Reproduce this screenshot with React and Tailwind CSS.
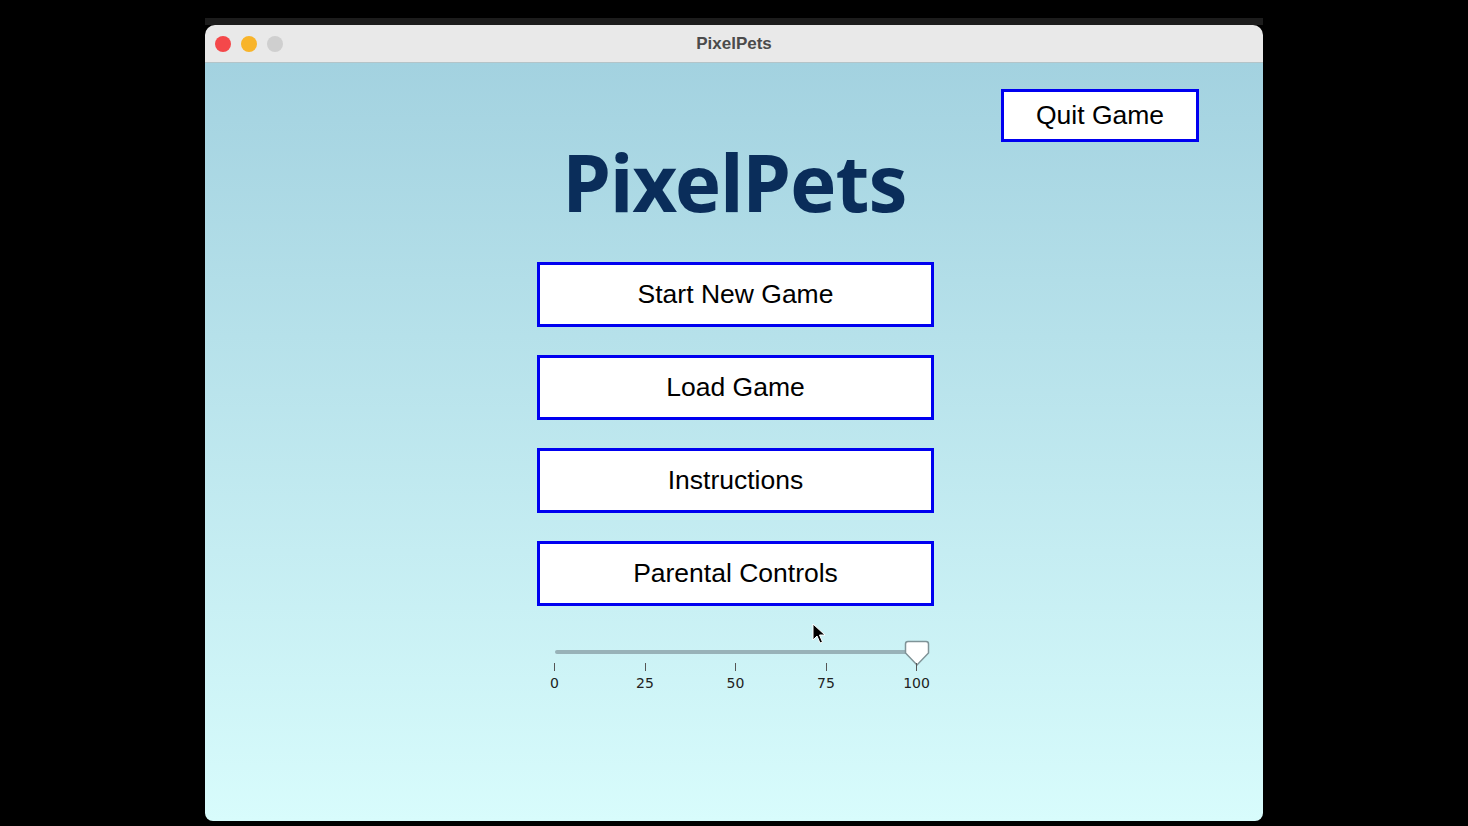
import React from "react";

function MenuButton({ children }) {
  return (
    <button className="w-[397px] h-[65px] bg-white border-[3px] border-[#0000f0] flex items-center justify-center text-[26.5px] text-black font-['Liberation_Sans',Arial,sans-serif]">
      {children}
    </button>
  );
}

export default function App() {
  const ticks = ["0", "25", "50", "75", "100"];
  return (
    <div className="w-[1468px] h-[826px] bg-black relative overflow-hidden font-['Liberation_Sans',Arial,sans-serif]">
      <div className="pt-[18px] pl-[205px]">
        <div className="w-[1058px] h-[7px] bg-[#1c1c1c]" />
        <div className="w-[1058px] h-[796px] rounded-t-[10px] rounded-b-[8px] overflow-hidden flex flex-col">
          <div className="h-[38px] bg-[#e9e9e9] border-b border-[#b4c4c8] relative flex items-center justify-center">
            <div className="absolute left-[10px] top-[11px] flex gap-[10px]">
              <div className="w-[16px] h-[16px] rounded-full bg-[#f4484a]" />
              <div className="w-[16px] h-[16px] rounded-full bg-[#f8b42a]" />
              <div className="w-[16px] h-[16px] rounded-full bg-[#cfcfcf]" />
            </div>
            <span className="text-[17px] font-bold text-[#4b4b4b] font-['Liberation_Sans',Arial,sans-serif] mt-[1px]">PixelPets</span>
          </div>
          <div className="flex-1 bg-gradient-to-b from-[#a3d2e0] to-[#d8fcfc] relative flex flex-col items-center">
            <div className="w-full flex justify-end pr-[64px] pt-[26px]">
              <button className="w-[198px] h-[53px] bg-white border-[3px] border-[#0000f0] flex items-center justify-center text-[26.5px] text-black font-['Liberation_Sans',Arial,sans-serif]">
                Quit Game
              </button>
            </div>
            <h1 className="h-[120px] text-[78px] leading-[80px] font-bold text-[#0a2d5a] font-['Noto_Sans',sans-serif] tracking-[-1px] pl-[1px]">
              PixelPets
            </h1>
            <div className="flex flex-col gap-[28px] pl-[3px]">
              <MenuButton>Start New Game</MenuButton>
              <MenuButton>Load Game</MenuButton>
              <MenuButton>Instructions</MenuButton>
              <MenuButton>Parental Controls</MenuButton>
            </div>
            <div className="mt-[34px] w-[396px] ml-[3px] relative h-[60px]">
              <div className="absolute left-[17px] top-[10px] w-[362px] h-[4px] rounded-full bg-[#98b2b8]" />
              <svg className="absolute left-[366px] top-[0px]" width="26" height="30" viewBox="0 0 26 30">
                <path d="M4 1.5 H22 Q24.5 1.5 24.5 4 V13 L13 25 L1.5 13 V4 Q1.5 1.5 4 1.5 Z" fill="#ffffff" stroke="#7f9397" strokeWidth="1.5" />
              </svg>
              <div className="absolute left-0 top-[23px] w-[396px] flex justify-between">
                {ticks.map((t) => (
                  <div key={t} className="w-[34px] flex flex-col items-center">
                    <div className="w-px h-[8px] bg-[#555]" />
                    <span className="mt-[3px] text-[14px] text-[#222] font-['DejaVu_Sans',sans-serif] leading-[18px]">{t}</span>
                  </div>
                ))}
              </div>
            </div>
            <svg className="absolute left-[607px] top-[560px]" width="14" height="22" viewBox="0 0 14 22">
              <path d="M1 1 L1 17 L5 13 L8 20 L10.5 19 L7.5 12 L13 12 Z" fill="#000" stroke="#fff" strokeWidth="1" />
            </svg>
          </div>
        </div>
      </div>
    </div>
  );
}
